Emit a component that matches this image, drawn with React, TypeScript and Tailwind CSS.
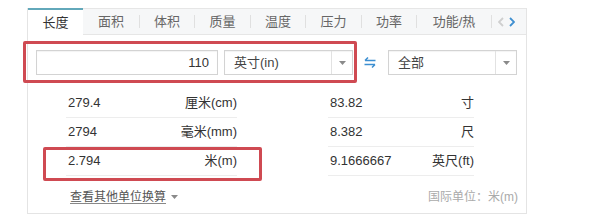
import React from "react";

const tabs = [
  { label: "长度", w: "w-[55px]" },
  { label: "面积", w: "w-[56px]" },
  { label: "体积", w: "w-[54px]" },
  { label: "质量", w: "w-[55px]" },
  { label: "温度", w: "w-[54px]" },
  { label: "压力", w: "w-[55px]" },
  { label: "功率", w: "w-[54px]" },
  { label: "功能/热", w: "w-[74px]" },
];

const leftRows = [
  ["279.4", "厘米(cm)"],
  ["2794", "毫米(mm)"],
  ["2.794", "米(m)"],
];

const rightRows = [
  ["83.82", "寸"],
  ["8.382", "尺"],
  ["9.1666667", "英尺(ft)"],
];

function Caret() {
  return (
    <svg width="7" height="4" viewBox="0 0 7 4" className="block">
      <path d="M0 0h7L3.5 4z" fill="#8a8a8a" />
    </svg>
  );
}

function Select({ value }: { value: string }) {
  return (
    <div className="w-[129px] h-[25px] flex border border-[#d3d3d3] bg-white shadow-[inset_0_1px_1px_rgba(0,0,0,0.05)]">
      <div className="flex-1 flex items-center pl-[9px] text-[13px] text-[#444]">{value}</div>
      <div className="w-[21px] border-l border-[#e2e2e2] flex items-center justify-center">
        <Caret />
      </div>
    </div>
  );
}

function SwapIcon() {
  return (
    <svg width="12" height="11" viewBox="0 0 12 11" fill="none" className="block">
      <path d="M1 3.5h10.5M1 3.5 4 0.5" stroke="#3d8fd1" strokeWidth="1.5" />
      <path d="M0.5 7.5H11M11 7.5l-3 3" stroke="#3d8fd1" strokeWidth="1.5" />
    </svg>
  );
}

function Row({ value, unit }: { value: string; unit: string }) {
  return (
    <div className="h-[29px] flex items-center justify-between border-b border-[#ededed] text-[13px] text-[#333]">
      <span className="pl-[2px]">{value}</span>
      <span>{unit}</span>
    </div>
  );
}

export default function App() {
  return (
    <div
      className="relative w-[600px] h-[217px] bg-white overflow-hidden pt-[8px]"
      style={{ fontFamily: '"Liberation Sans", "Noto Sans CJK SC", sans-serif' }}
    >
      <div className="ml-[27px] w-[500px] border-x border-b border-[#e4e4e4] bg-white">
        {/* tabs */}
        <div className="h-[27px] flex border-t border-b border-[#e6e6e6] bg-[#f6f7f8]">
          {tabs.map((t, i) => (
            <React.Fragment key={t.label}>
              {i > 1 && <span className="w-px h-[13px] self-center bg-[#e0e0e0]" />}
              {i === 0 ? (
                <div
                  className={`${t.w} h-[27px] -mt-px self-start flex items-center justify-center bg-white border-t-2 border-[#62a8ba] text-[13px] text-[#333]`}
                >
                  {t.label}
                </div>
              ) : (
                <div className={`${t.w} flex items-center justify-center text-[13px] text-[#666]`}>{t.label}</div>
              )}
            </React.Fragment>
          ))}
          <span className="w-px h-[13px] self-center bg-[#e0e0e0]" />
          <div className="flex-1 flex items-center justify-center gap-[5px] pr-[6px]">
            <svg width="6" height="10" viewBox="0 0 6 10" fill="none" className="block">
              <path d="M5 1 1 5l4 4" stroke="#cfcfcf" strokeWidth="1.8" />
            </svg>
            <svg width="6" height="10" viewBox="0 0 6 10" fill="none" className="block">
              <path d="M1 1l4 4-4 4" stroke="#3f8fd0" strokeWidth="1.8" />
            </svg>
          </div>
        </div>

        {/* body */}
        <div className="px-[8px] pt-[15px]">
          <div className="h-[25px] flex items-center">
            <div className="w-[182px] h-[25px] border border-[#d3d3d3] bg-white shadow-[inset_0_1px_1px_rgba(0,0,0,0.05)] flex items-center justify-end pr-[8px] text-[13px] text-[#333]">
              110
            </div>
            <div className="ml-[6px]">
              <Select value="英寸(in)" />
            </div>
            <div className="ml-[11px]">
              <SwapIcon />
            </div>
            <div className="ml-[12px]">
              <Select value="全部" />
            </div>
          </div>
        </div>

        <div className="mt-[14px] flex pl-[38px]">
          <div className="w-[171px]">
            {leftRows.map(([v, u]) => (
              <Row key={v} value={v} unit={u} />
            ))}
          </div>
          <div className="w-[146px] ml-[91px]">
            {rightRows.map(([v, u]) => (
              <Row key={v} value={v} unit={u} />
            ))}
          </div>
        </div>

        <div className="h-[37px] pt-[4px] flex items-center justify-between pl-[42px] pr-[8px] text-[12px]">
          <div className="flex items-center gap-[5px] text-[#555]">
            <span className="underline underline-offset-2 decoration-[#888]">查看其他单位换算</span>
            <Caret />
          </div>
          <span className="text-[#aaa]">国际单位：米(m)</span>
        </div>
      </div>

      {/* annotation boxes */}
      <div className="absolute left-[23px] top-[41px] w-[334px] h-[42px] border-[3px] border-[#cf4a52] rounded-[2px] pointer-events-none" />
      <div className="absolute left-[43px] top-[147px] w-[219px] h-[34px] border-[3px] border-[#cf4a52] rounded-[2px] pointer-events-none" />
    </div>
  );
}
